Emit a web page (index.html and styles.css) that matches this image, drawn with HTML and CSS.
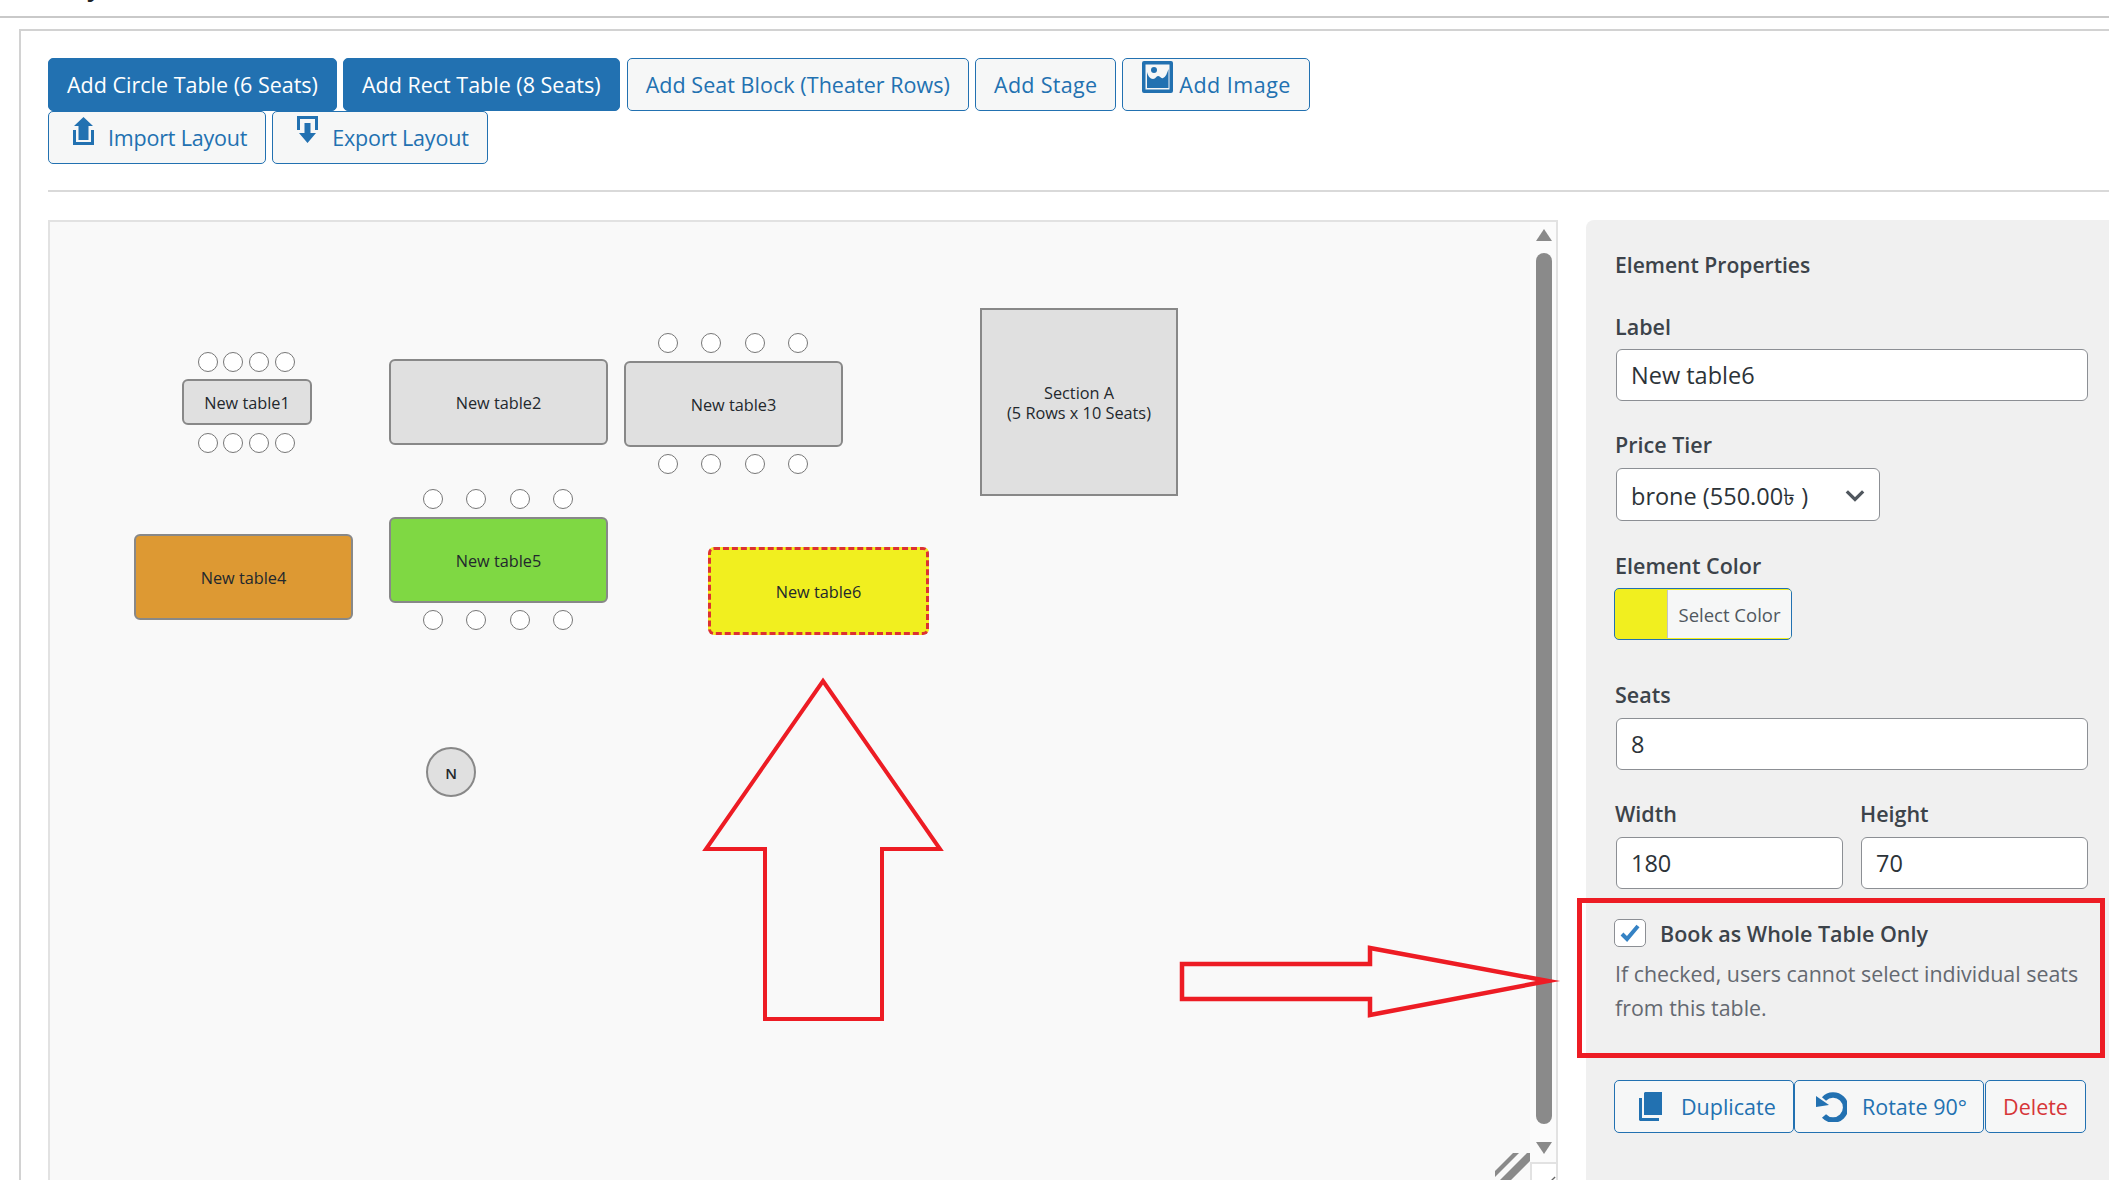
FILE: index.html
```html
<!DOCTYPE html>
<html lang="en">
<head>
<meta charset="utf-8">
<title>Seating Layout</title>
<link rel="stylesheet" href="styles.css">
</head>
<body>
<header class="top"><span class="top-title">Layout</span></header>
<main class="card">
  <div class="toolbar">
    <button class="btn primary">Add Circle Table (6 Seats)</button>
    <button class="btn primary">Add Rect Table (8 Seats)</button>
    <button class="btn b-seat">Add Seat Block (Theater Rows)</button>
    <button class="btn b-stage">Add Stage</button>
    <button class="btn icon-image"><svg class="ic-image" viewBox="0 0 31 32"><path fill="#2271b1" fill-rule="evenodd" d="M2 0h27a2 2 0 0 1 2 2v28a2 2 0 0 1-2 2H2a2 2 0 0 1-2-2V2a2 2 0 0 1 2-2Zm1.500 3.500v25h24v-25Z"/><circle cx="12" cy="9" r="3" fill="#2271b1"/><path fill="#2271b1" d="M5 11c1 4 3 7 6 7 3 0 3-3 5-3 2 0 3 3 5 2 3-1 4-5 5.500-9v19H5Z"/></svg>Add Image</button>
    <button class="btn icon-import"><svg class="ic-import" viewBox="0 0 21 28"><path fill="#2271b1" d="M10.500 0 20 9h-4.500v14h-10V9H1Z"/><path fill="#2271b1" d="M0 13h3v12h15V13h3v15H0Z"/></svg>Import Layout</button>
    <button class="btn icon-export"><svg class="ic-export" viewBox="0 0 21 27"><path fill="#2271b1" d="M0 0h21v14h-3V3H3v11H0Z"/><path fill="#2271b1" d="M7.500 7h6v10H19l-8.500 10L2 17h5.500Z"/></svg>Export Layout</button>
  </div>
  <hr class="rule">
  <div class="workspace">
    <section class="canvas">
      <div class="stage">
        <div class="node table t1">New table1</div>
        <i class="seat" style="left:148px;top:130px"></i><i class="seat" style="left:173px;top:130px"></i><i class="seat" style="left:199px;top:130px"></i><i class="seat" style="left:225px;top:130px"></i>
        <i class="seat" style="left:148px;top:211px"></i><i class="seat" style="left:173px;top:211px"></i><i class="seat" style="left:199px;top:211px"></i><i class="seat" style="left:225px;top:211px"></i>
        <div class="node table t2">New table2</div>
        <div class="node table t3">New table3</div>
        <i class="seat" style="left:608px;top:111px"></i><i class="seat" style="left:651px;top:111px"></i><i class="seat" style="left:695px;top:111px"></i><i class="seat" style="left:738px;top:111px"></i>
        <i class="seat" style="left:608px;top:232px"></i><i class="seat" style="left:651px;top:232px"></i><i class="seat" style="left:695px;top:232px"></i><i class="seat" style="left:738px;top:232px"></i>
        <div class="node table t4">New table4</div>
        <div class="node table t5">New table5</div>
        <i class="seat" style="left:373px;top:267px"></i><i class="seat" style="left:416px;top:267px"></i><i class="seat" style="left:460px;top:267px"></i><i class="seat" style="left:503px;top:267px"></i>
        <i class="seat" style="left:373px;top:388px"></i><i class="seat" style="left:416px;top:388px"></i><i class="seat" style="left:460px;top:388px"></i><i class="seat" style="left:503px;top:388px"></i>
        <div class="node table t6">New table6</div>
        <div class="node section">Section A<br>(5 Rows x 10 Seats)</div>
        <div class="node stage-mark">N</div>
        <svg class="resizer" viewBox="0 0 35 27"><path d="M18 0h6L0 24v-6Z M32 0h3v8L16 27H5Z" fill="#8a8a8a"/></svg>
      </div>
      <div class="scrollbar">
        <span class="sb-up"></span>
        <span class="sb-thumb"></span>
        <span class="sb-down"></span>
        <span class="sb-corner"><svg class="grip" viewBox="0 0 10 10"><path d="M1 9 9 1" stroke="#666" stroke-width="1.500"/></svg></span>
      </div>
    </section>
    <aside class="panel">
      <h2 class="panel-title">Element Properties</h2>
      <div class="field f-label">
        <label class="lbl">Label</label>
        <div class="input">New table6</div>
      </div>
      <div class="field f-price">
        <label class="lbl">Price Tier</label>
        <div class="input select">brone (550.00৳ )<svg class="chev" viewBox="0 0 18 12"><path d="M2 2l7 7 7-7" fill="none" stroke="#50575e" stroke-width="2.800"/></svg></div>
      </div>
      <div class="field f-color">
        <label class="lbl">Element Color</label>
        <button class="color-btn"><span class="swatch"></span><span class="color-text">Select Color</span></button>
      </div>
      <div class="field f-seats">
        <label class="lbl">Seats</label>
        <div class="input">8</div>
      </div>
      <div class="dims">
        <div class="field"><label class="lbl">Width</label><div class="input">180</div></div>
        <div class="field"><label class="lbl">Height</label><div class="input">70</div></div>
      </div>
      <div class="whole">
        <div class="check-row">
          <span class="checkbox"><svg class="tick" viewBox="0 0 20 18"><path d="M2 10l5 5L18 2" fill="none" stroke="#3582c4" stroke-width="4"/></svg></span>
          <span class="check-text">Book as Whole Table Only</span>
        </div>
        <p class="hint">If checked, users cannot select individual seats from this table.</p>
      </div>
      <div class="actions">
        <button class="btn act a-dup"><svg class="ic-dup" viewBox="0 0 23 29"><path fill="#2271b1" d="M5 1l1-1h17v23H5Z"/><path fill="#2271b1" d="M0 6h3v20h17v3H1l-1-1Z"/></svg>Duplicate</button>
        <button class="btn act a-rot"><svg class="ic-rot" viewBox="0 0 31 31"><path d="M8 8a12.500 12.500 0 1 1 0 17" fill="none" stroke="#2271b1" stroke-width="5.500"/><path fill="#2271b1" d="M0 5l13 9-13 2Z"/></svg>Rotate 90°</button>
        <button class="btn act a-del">Delete</button>
      </div>
    </aside>
  </div>
</main>
<svg class="notes" viewBox="0 0 2109 1180">
  <path class="note-thin" d="M823 681 940 849H882V1019H765V849H706Z"/>
  <path class="note-thick" d="M1182 964H1370V948L1548 981 1370 1015V999H1182Z"/>
</svg>
<div class="redbox"></div>
</body>
</html>
```
FILE: styles.css
```css
* { box-sizing: border-box; }
html, body { margin: 0; height: 1180px; overflow: hidden; background: #fff; }
body { font-family: "Open Sans", "Liberation Sans", sans-serif; color: #1d2327; position: relative; }

.top { height: 18px; border-bottom: 2px solid #c9c9c9; padding-left: 58px; overflow: hidden; }
.top-title { display: block; font-size: 26px; font-weight: 600; line-height: 26px; margin-top: -27px; }

.card { margin: 11px 0 0 19px; width: 2200px; height: 1200px; border: 2px solid #d2d2d2; padding: 27px 0 0 27px; }

.toolbar { width: 1400px; display: flex; flex-wrap: wrap; column-gap: 6px; height: 105px; align-content: flex-start; }
.btn { font-family: inherit; font-size: 21.500px; height: 53px; padding: 0 18px; border: 1.500px solid #2271b1; border-radius: 5px; background: #f6f7f7; color: #2271b1; display: inline-flex; align-items: center; white-space: nowrap; line-height: 1; }
.primary { background: #2271b1; color: #fff; }
.b-seat { margin-left: 1px; letter-spacing: 0.050px; }
.b-stage { letter-spacing: 0.300px; }
.icon-image { letter-spacing: 0.500px; }
.icon-import, .icon-export { letter-spacing: -0.200px; }
.ic-image { width: 31px; height: 32px; margin: -16px 6px 0 1px; }
.ic-import { width: 21px; height: 28px; margin: -14px 14px 0 6px; }
.ic-export { width: 21px; height: 27px; margin: -16px 14px 0 6px; }

.rule { border: 0; border-top: 2px solid #d9d9d9; margin: 27px 0 28px; width: 2200px; }

.workspace { display: flex; gap: 28px; align-items: flex-start; }

.canvas { width: 1510px; height: 1000px; border: 2px solid #e2e2e2; background: #f9f9f9; display: flex; }
.stage { flex: 1; position: relative; }
.node { position: absolute; display: flex; align-items: center; justify-content: center; text-align: center; font-size: 16.300px; color: #23282d; line-height: 20px; background: #e0e0e0; border: 2px solid #888; padding-top: 1px; }
.table { border-radius: 6px; }
.t1 { left: 132px; top: 157px; width: 130px; height: 46px; }
.t2 { left: 339px; top: 137px; width: 219px; height: 86px; }
.t3 { left: 574px; top: 139px; width: 219px; height: 86px; }
.t4 { left: 84px; top: 312px; width: 219px; height: 86px; background: #dd9933; }
.t5 { left: 339px; top: 295px; width: 219px; height: 86px; background: #7fd843; }
.t6 { left: 658px; top: 325px; width: 221px; height: 88px; background: #f1ef1f; border: 3px dashed #dc3232; }
.section { left: 930px; top: 86px; width: 198px; height: 188px; border-radius: 0; }
.stage-mark { left: 376px; top: 525px; width: 50px; height: 50px; border-radius: 50%; font-weight: 600; font-size: 15px; }
.seat { position: absolute; width: 20px; height: 20px; border-radius: 50%; background: #fff; border: 1.500px solid #777; }
.resizer { position: absolute; right: 0; bottom: 38px; width: 35px; height: 27px; }

.scrollbar { width: 26px; background: #fbfbfb; position: relative; display: flex; flex-direction: column; align-items: center; padding: 7px 0 0 2px; }
.sb-up { width: 16px; height: 12px; background: #8a8a8a; clip-path: polygon(50% 0, 100% 100%, 0 100%); flex: none; }
.sb-thumb { width: 16px; height: 871px; margin-top: 12px; background: #8a8a8a; border-radius: 8px; flex: none; }
.sb-down { width: 16px; height: 12px; margin-top: 18px; background: #8a8a8a; clip-path: polygon(0 0, 100% 0, 50% 100%); flex: none; }
.sb-corner { position: absolute; right: 0; top: 940px; width: 26px; height: 60px; border: 2px solid #e2e2e2; border-right: 0; background: #fff; }
.grip { position: absolute; left: 15px; top: 12px; width: 9px; height: 9px; }

.panel { width: 560px; height: 1000px; background: #f0f0f0; border-radius: 8px; padding: 0 28px 0 29px; }
.panel-title { margin: 32px 0 0; font-size: 21.100px; font-weight: 600; color: #3c434a; line-height: 26px; }
.field { display: flex; flex-direction: column; }
.lbl { font-size: 21.500px; font-weight: 600; color: #3c434a; line-height: 26px; margin-bottom: 10px; }
.f-label { margin-top: 36px; }
.f-label .lbl { margin-bottom: 9px; }
.input { height: 52px; width: 472px; background: #fff; border: 1.500px solid #8c8f94; border-radius: 6px; font-size: 23.500px; line-height: 30px; color: #2c3338; display: flex; align-items: center; padding: 0 14px; margin-left: 1px; }
.f-price { margin-top: 31px; }
.select { width: 264px; height: 53px; position: relative; padding-top: 2px; }
.chev { position: absolute; right: 13px; top: 20px; width: 22px; height: 14px; }
.f-color { margin-top: 32px; }
.f-color .lbl { margin-bottom: 9px; }
.color-btn { width: 178px; height: 52px; padding: 0; display: flex; border: 1.500px solid #2271b1; border-radius: 5px; overflow: hidden; background: #f1ef1f; font-family: inherit; margin-left: -1px; }
.swatch { width: 53px; border-right: 1.500px solid #c3c4c7; align-self: stretch; margin: 1px 0; }
.color-text { flex: 1; align-self: stretch; margin: 1px 0; background: #f6f7f7; font-size: 18.500px; color: #50575e; white-space: nowrap; display: flex; align-items: center; justify-content: center; }
.f-seats { margin-top: 42px; }
.dims { margin-top: 31px; display: grid; grid-template-columns: 227px 227px; column-gap: 18px; }
.dims .input { width: 227px; }
.whole { margin-top: 29px; height: 139px; }
.check-row { display: flex; align-items: center; gap: 14px; height: 30px; margin-left: -1px; }
.checkbox { width: 32px; height: 28px; background: #fff; border: 1.500px solid #8c8f94; border-radius: 5px; display: flex; align-items: center; justify-content: center; }
.tick { width: 20px; height: 18px; }
.check-text { font-size: 21.500px; font-weight: 600; color: #3c434a; }
.hint { margin: 9px 0 0; font-size: 21.400px; line-height: 34px; color: #646970; }
.actions { margin: 23px 0 0 -1px; display: flex; }
.act { padding: 0 15px; }
.a-dup { width: 180px; padding-left: 24px; }
.a-rot { width: 190px; padding-left: 21px; }
.a-del { width: 101px; color: #d63638; padding: 0; justify-content: center; margin-left: 1px; }
.ic-dup { width: 23px; height: 29px; margin-right: 19px; }
.ic-rot { width: 31px; height: 31px; margin-right: 15px; }

.notes { position: absolute; left: 0; top: 0; width: 2109px; height: 1180px; pointer-events: none; }
.note-thin { fill: none; stroke: #ed1c24; stroke-width: 4; }
.note-thick { fill: none; stroke: #ed1c24; stroke-width: 4.500; stroke-miterlimit: 12; }
.redbox { position: absolute; left: 1577px; top: 898px; width: 528px; height: 160px; border: 5px solid #ed1c24; }
```
